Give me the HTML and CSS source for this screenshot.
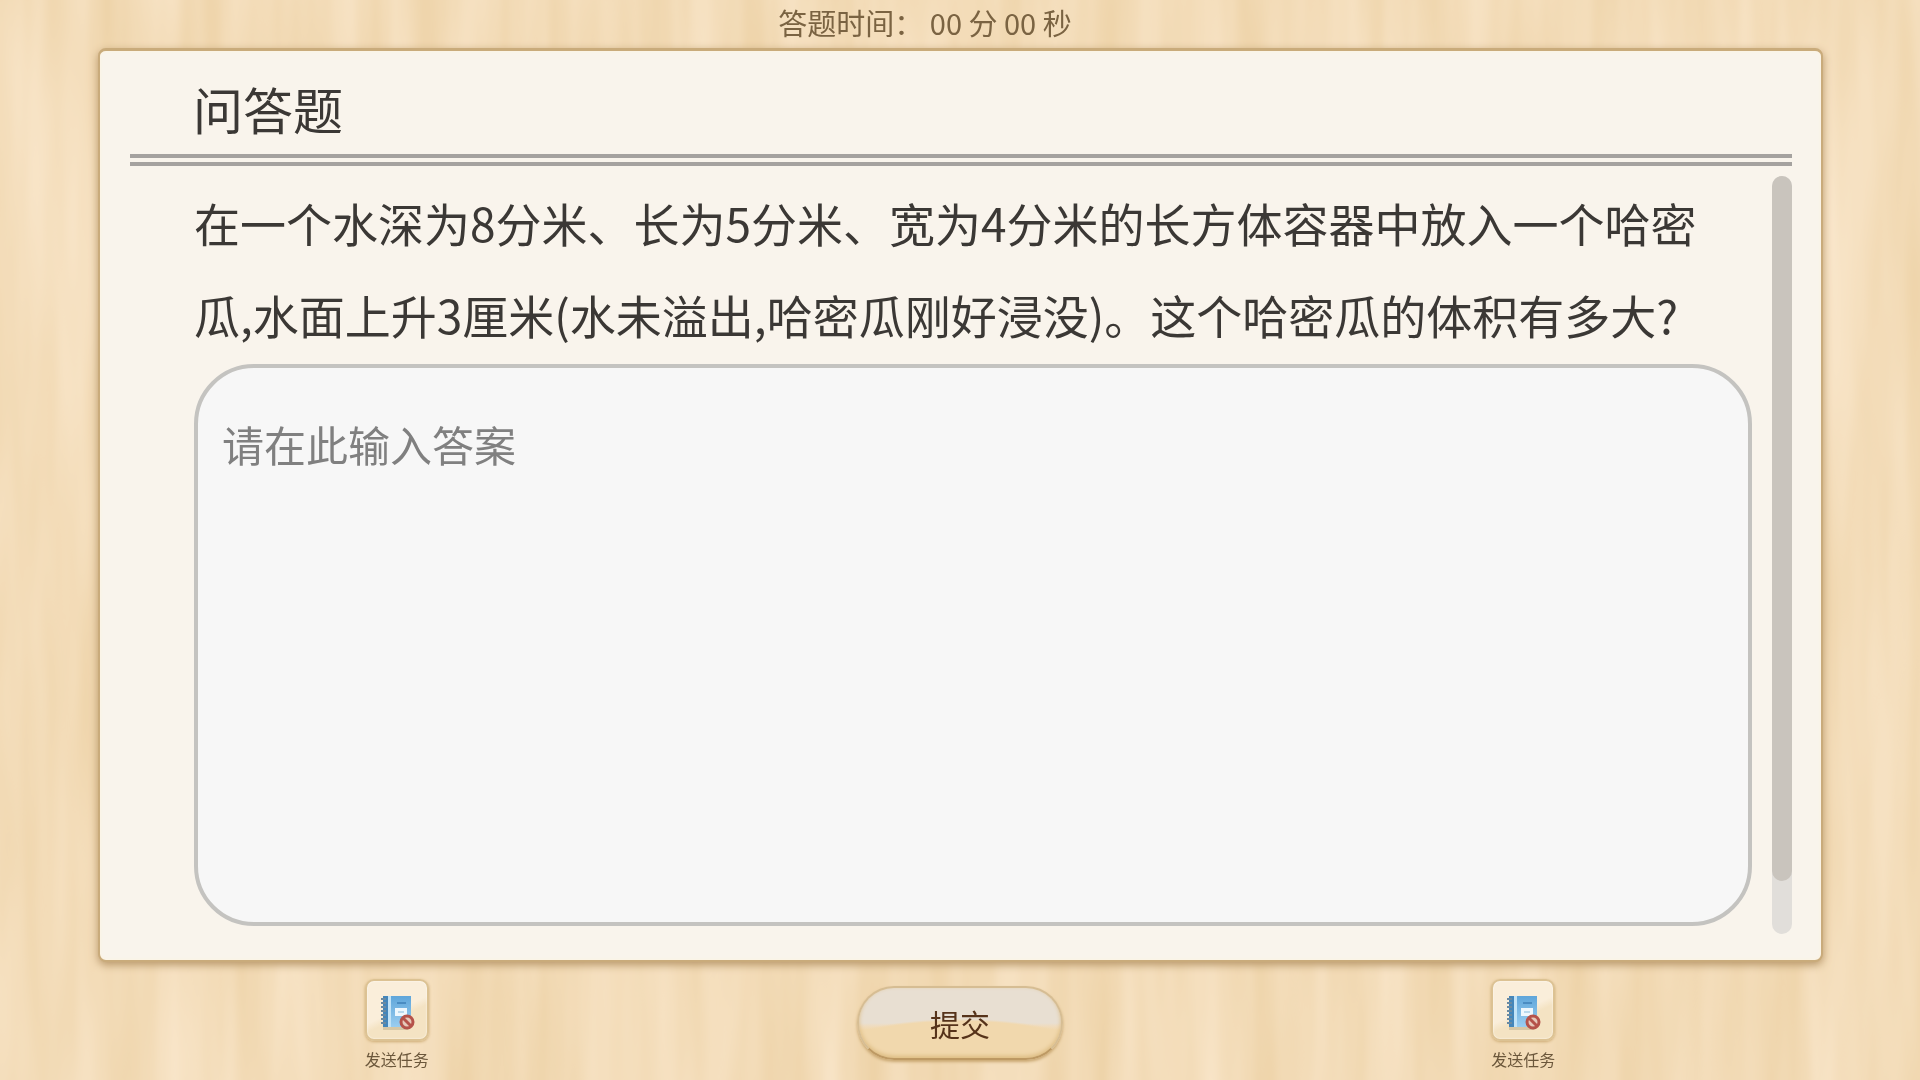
FILE: index.html
```html
<!DOCTYPE html>
<html lang="zh-CN">
<head>
<meta charset="utf-8">
<meta name="viewport" content="width=device-width, initial-scale=1">
<title>问答题</title>
<link rel="stylesheet" href="styles.css">
</head>
<body>
<svg class="wood" aria-hidden="true">
  <filter id="grain" x="0" y="0" width="100%" height="100%" color-interpolation-filters="sRGB">
    <feTurbulence type="fractalNoise" baseFrequency="0.022 0.0022" numOctaves="3" seed="8"/>
    <feColorMatrix values="0.06 0 0 0 0.922  0.1 0 0 0 0.811  0.18 0 0 0 0.63  0 0 0 0 1"/>
  </filter>
  <rect width="100%" height="100%" filter="url(#grain)"/>
</svg>
<svg class="defs" aria-hidden="true">
  <defs>
    <linearGradient id="cover" x1="0" y1="0" x2="0" y2="1">
      <stop offset="0" stop-color="#5fa6da"/>
      <stop offset="1" stop-color="#9acdf0"/>
    </linearGradient>
    <symbol id="notebook" viewBox="0 0 36 36">
      <path d="M4 3h28v29l-3 3H4z" fill="#b9ac87" opacity=".5"/>
      <path d="M4 1h6v31H4z" fill="#4486ba"/>
      <path d="M9 1h23v31H9z" fill="url(#cover)"/>
      <path d="M9 1h3v31H9z" fill="#c2e3f7"/>
      <path d="M18 8h9" stroke="#4a8cc2" stroke-width="2"/>
      <path d="M16 13h12v8H16z" fill="#eef7fd"/>
      <path d="M19 17h6" stroke="#b9d9ed" stroke-width="2"/>
      <path d="M2 4h5M2 8h5M2 12h5M2 16h5M2 20h5M2 24h5M2 28h5" stroke="#6a8aa2" stroke-width="2"/>
      <circle cx="28" cy="27" r="6" fill="#e6c8ba" stroke="#b5524a" stroke-width="3"/>
      <path d="M24 23l8 8" stroke="#b5524a" stroke-width="3"/>
    </symbol>
  </defs>
</svg>

<header class="timer">答题时间： 00 分 00 秒</header>

<main class="card">
  <h1 class="title">问答题</h1>
  <div class="panel">
    <div class="question">
      <label class="prompt" for="answer">在一个水深为8分米、长为5分米、宽为4分米的长方体容器中放入一个哈密瓜,水面上升3厘米(水未溢出,哈密瓜刚好浸没)。这个哈密瓜的体积有多大?</label>
      <textarea class="answer" id="answer" placeholder="请在此输入答案"></textarea>
    </div>
    <div class="track"><div class="thumb"></div></div>
  </div>
</main>

<footer class="actions">
  <button class="task" type="button">
    <span class="tile"><svg class="icon" aria-hidden="true"><use href="#notebook"/></svg></span>
    <span>发送任务</span>
  </button>
  <button class="submit" type="submit">提交</button>
  <button class="task" type="button">
    <span class="tile"><svg class="icon" aria-hidden="true"><use href="#notebook"/></svg></span>
    <span>发送任务</span>
  </button>
</footer>
</body>
</html>
```
FILE: styles.css
```css
* {
  box-sizing: border-box;
}

body {
  margin: 0;
  min-height: 100vh;
  display: flex;
  flex-direction: column;
  background: #f3dcb8;
  font-family: "Noto Sans CJK SC", sans-serif;
  color: #3b3835;
}

button,
textarea {
  font-family: inherit;
}

.wood {
  position: fixed;
  inset: 0;
  z-index: -1;
  width: 100%;
  height: 100%;
}

.defs {
  position: absolute;
  width: 0;
  height: 0;
}

.timer {
  padding: 0 70px 4px 0;
  font-size: 29px;
  line-height: 44px;
  text-align: center;
  color: #7a6342;
}

.card {
  flex: 1;
  display: flex;
  flex-direction: column;
  margin: 0 calc(5% + 1px) 0 calc(5% + 2px);
  padding: 0 29px 26px 30px;
  border: 2px solid #c9ab7b;
  border-top-width: 3px;
  border-radius: 8px;
  background: #f9f4ec;
  box-shadow: 0 3px 8px #b8976a, inset 0 0 3px #fff3dc;
}

.title {
  margin: 0;
  padding: 17px 0 0 63px;
  height: 115px;
  border-bottom: 12px double #a5a29f;
  font-size: 50px;
  font-weight: 400;
  line-height: 80px;
}

.panel {
  flex: 1;
  display: flex;
  gap: 20px;
  padding-top: 10px;
}

.question {
  flex: 1;
  display: flex;
  flex-direction: column;
  gap: 4px;
  padding: 0 0 8px 64px;
}

.prompt {
  font-size: 46px;
  line-height: 92px;
}

.answer {
  flex: 1;
  display: block;
  width: 100%;
  min-height: 240px;
  padding: 46px 24px;
  border: 4px solid #c4c3c0;
  border-radius: 60px;
  outline: 0;
  background: #f7f7f7;
  color: #3b3835;
  font-size: 42px;
  line-height: 60px;
  resize: none;
}

.answer::placeholder {
  color: #808080;
}

.track {
  width: 20px;
  border-radius: 10px;
  background: #e1deda;
}

.thumb {
  height: 93%;
  border-radius: 10px;
  background: #c9c4bd;
}

.actions {
  display: grid;
  grid-template-columns: repeat(3, 1fr);
  justify-items: center;
  align-items: start;
  width: 88%;
  height: 118px;
  margin: 0 auto;
  padding-top: 17px;
}

.task {
  display: flex;
  flex-direction: column;
  align-items: center;
  gap: 6px;
  padding: 0;
  border: 0;
  background: none;
  font-size: 16px;
  line-height: 24px;
  color: #6b573b;
  cursor: pointer;
}

.tile {
  display: grid;
  place-items: center;
  width: 64px;
  height: 62px;
  padding-top: 6px;
  border: 2px solid #dcc293;
  border-radius: 9px;
  background: linear-gradient(155deg, #faeeda 0 50%, #f4e3c3 60%);
  box-shadow: 0 1px 3px #cdab73, inset 0 0 2px #fff;
}

.icon {
  width: 36px;
  height: 36px;
}

.submit {
  width: 206px;
  height: 74px;
  margin-top: 7px;
  padding: 0;
  border: 2px solid #d6bd93;
  border-bottom-color: #bd9963;
  border-radius: 37px;
  background:
    radial-gradient(ellipse 70% 56% at 50% 100%, #f1d8ad 0 94%, transparent),
    linear-gradient(#e8dfd2 0 50%, #efdcc0 54%, #f1d8ad 60%);
  box-shadow: 0 2px 3px #c9a771, inset 0 -2px 4px #dcbb80;
  font-size: 30px;
  line-height: 44px;
  color: #56331a;
  cursor: pointer;
}
```
